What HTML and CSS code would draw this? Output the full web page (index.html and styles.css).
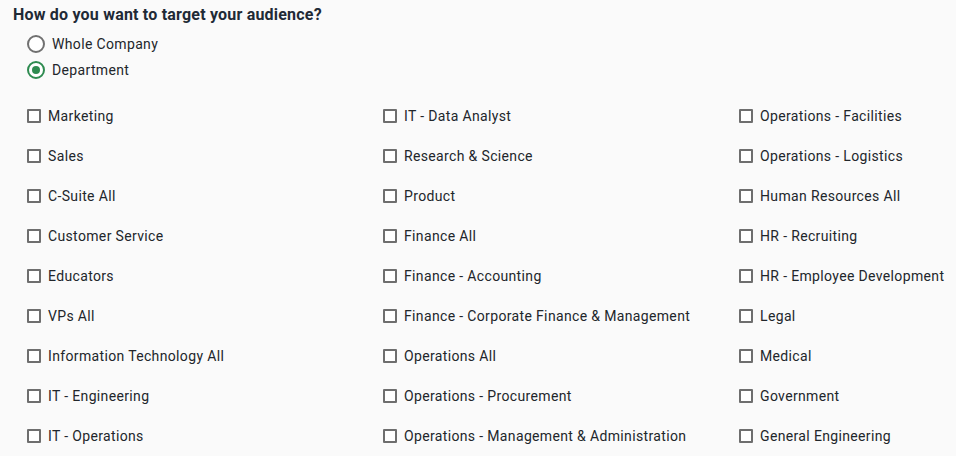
FILE: index.html
```html
<!DOCTYPE html>
<html>
<head>
<meta charset="utf-8">
<link rel="stylesheet" href="styles.css">
</head>
<body>
<div class="page">
  <h1 class="title">How do you want to target your audience?</h1>
  <div class="radios">
    <label class="radio-row"><span class="radio"></span><span class="label">Whole Company</span></label>
    <label class="radio-row"><span class="radio checked"></span><span class="label">Department</span></label>
  </div>
  <div class="grid">
    <div class="item"><span class="box"></span><span class="label">Marketing</span></div>
    <div class="item"><span class="box"></span><span class="label">IT - Data Analyst</span></div>
    <div class="item"><span class="box"></span><span class="label">Operations - Facilities</span></div>
    <div class="item"><span class="box"></span><span class="label">Sales</span></div>
    <div class="item"><span class="box"></span><span class="label">Research &amp; Science</span></div>
    <div class="item"><span class="box"></span><span class="label">Operations - Logistics</span></div>
    <div class="item"><span class="box"></span><span class="label">C-Suite All</span></div>
    <div class="item"><span class="box"></span><span class="label">Product</span></div>
    <div class="item"><span class="box"></span><span class="label">Human Resources All</span></div>
    <div class="item"><span class="box"></span><span class="label">Customer Service</span></div>
    <div class="item"><span class="box"></span><span class="label">Finance All</span></div>
    <div class="item"><span class="box"></span><span class="label">HR - Recruiting</span></div>
    <div class="item"><span class="box"></span><span class="label">Educators</span></div>
    <div class="item"><span class="box"></span><span class="label">Finance - Accounting</span></div>
    <div class="item"><span class="box"></span><span class="label">HR - Employee Development</span></div>
    <div class="item"><span class="box"></span><span class="label">VPs All</span></div>
    <div class="item"><span class="box"></span><span class="label">Finance - Corporate Finance &amp; Management</span></div>
    <div class="item"><span class="box"></span><span class="label">Legal</span></div>
    <div class="item"><span class="box"></span><span class="label">Information Technology All</span></div>
    <div class="item"><span class="box"></span><span class="label">Operations All</span></div>
    <div class="item"><span class="box"></span><span class="label">Medical</span></div>
    <div class="item"><span class="box"></span><span class="label">IT - Engineering</span></div>
    <div class="item"><span class="box"></span><span class="label">Operations - Procurement</span></div>
    <div class="item"><span class="box"></span><span class="label">Government</span></div>
    <div class="item"><span class="box"></span><span class="label">IT - Operations</span></div>
    <div class="item"><span class="box"></span><span class="label">Operations - Management &amp; Administration</span></div>
    <div class="item"><span class="box"></span><span class="label">General Engineering</span></div>
  </div>
</div>
</body>
</html>
```

FILE: styles.css
```css
html, body {
  margin: 0;
  padding: 0;
  background: #fafafa;
}
body {
  font-family: Roboto, "Liberation Sans", Arial, sans-serif;
  color: #22262b;
}
.page {
  padding: 3px 0 0 13px;
}
.title {
  margin: 0;
  font-size: 16px;
  line-height: 24px;
  font-weight: 700;
  color: #1f2a36;
  letter-spacing: 0.2px;
}
.radios {
  margin: 4px 0 0 14px;
  display: flex;
  flex-direction: column;
}
.radio-row {
  display: flex;
  align-items: center;
  height: 26px;
  gap: 7px;
}
.radio {
  flex-shrink: 0;
  box-sizing: border-box;
  width: 18px;
  height: 18px;
  border: 2px solid #707070;
  border-radius: 50%;
  background: #fff;
  display: flex;
  align-items: center;
  justify-content: center;
}
.radio.checked {
  border-color: #2e8b50;
}
.radio.checked::after {
  content: "";
  width: 8px;
  height: 8px;
  border-radius: 50%;
  background: #2e8b50;
}
.label {
  font-size: 14px;
  line-height: 20px;
  letter-spacing: 0.35px;
  color: #22262b;
  white-space: nowrap;
}
.grid {
  margin: 13px 0 0 14px;
  display: grid;
  grid-template-columns: 356px 356px 1fr;
  grid-auto-rows: 40px;
}
.item {
  display: flex;
  align-items: center;
  gap: 7px;
}
.box {
  flex-shrink: 0;
  box-sizing: border-box;
  width: 14px;
  height: 14px;
  border: 2px solid #6e6e6e;
  border-radius: 1px;
  background: #fff;
}
```
